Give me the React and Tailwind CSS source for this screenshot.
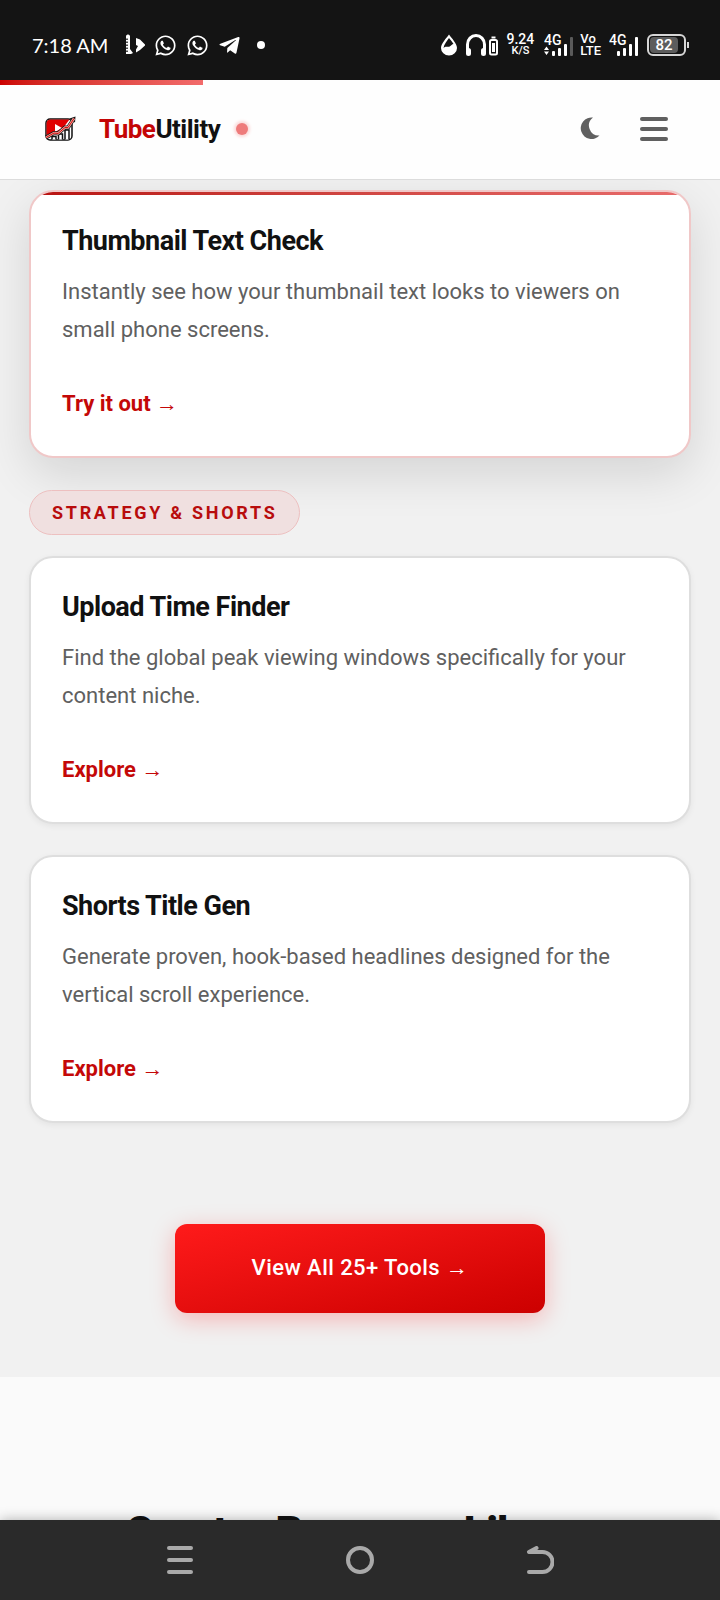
import { FaWhatsapp, FaTelegramPlane } from "react-icons/fa";

const tools = [
  {
    id: "thumbnail",
    title: "Thumbnail Text Check",
    text: "Instantly see how your thumbnail text looks to viewers on small phone screens.",
    link: "Try it out",
    active: true,
  },
];

const strategyTools = [
  {
    id: "upload-time",
    title: "Upload Time Finder",
    text: "Find the global peak viewing windows specifically for your content niche.",
    link: "Explore",
  },
  {
    id: "shorts-title",
    title: "Shorts Title Gen",
    text: "Generate proven, hook-based headlines designed for the vertical scroll experience.",
    link: "Explore",
  },
];

const Signal = ({ weak }) => (
  <svg width="30" height="24" viewBox="0 0 30 24" fill="#fff">
    <text x="0" y="12" fontSize="14" fontWeight="500">
      4G
    </text>
    {weak && <path d="M2.500 13.500l2.500 3.500h-5zM2.500 22l2.500-3.500h-5z" />}
    <rect x="8" y="18" width="3" height="5" rx="1" />
    <rect x="14" y="15" width="3" height="8" rx="1" />
    <rect x="20" y="11" width="3" height="12" rx="1" />
    <rect x="26" y="4" width="3" height="19" rx="1" fill={weak ? "#5a5a5a" : "#fff"} />
  </svg>
);

const StatusBar = () => (
  <div className="flex h-20 shrink-0 items-center justify-between bg-[#141414] pt-2.5 pr-[31px] pl-8 text-white">
    <div className="flex items-center">
      <span className="w-[93px] font-['Lato',sans-serif] text-[20px] leading-6">7:18 AM</span>
      <svg width="21" height="22" viewBox="0 0 21 22" fill="#fff">
        <path d="M1 3a2 2 0 0 1 4-1v13l3 4-2 1H1z" />
        <path d="M2 4.500v14" stroke="#141414" strokeWidth="1.500" strokeDasharray="1.500 1.500" />
        <path d="M11 4l4 1.500 5 5v1L15 16l-4 2.500v-3l2-3.500-2-1z" />
      </svg>
      <FaWhatsapp size={23} className="ml-2" />
      <FaWhatsapp size={23} className="ml-[9px]" />
      <FaTelegramPlane size={23} className="ml-[9px]" />
      <span className="ml-4 size-2 rounded-full bg-white" />
    </div>

    <div className="flex items-center">
      <svg width="16" height="22" viewBox="0 0 16 22">
        <path
          d="M8 .5C5.500 4 0 9.500 0 14a8 7.500 0 0 0 16 0C16 9.500 10.500 4 8 .5z"
          fill="#fff"
        />
        <path d="M8 4C6 7 3 10 2.500 14c2-2.500 4.300-.5 6.200-1.500 1.500-.8 2.300-2.500 3.800-2.500C11.500 8 9 5.500 8 4z" fill="#141414" />
      </svg>
      <svg width="34" height="24" viewBox="0 0 34 24" className="ml-2" fill="none" stroke="#fff">
        <path d="M2.500 17v-5.500a8.500 9 0 0 1 17 0V17" strokeWidth="3" />
        <path d="M3.500 17.500v3M18.500 17.500v3" strokeWidth="5" strokeLinecap="round" />
        <rect x="25" y="7" width="7" height="14.500" rx="1.500" strokeWidth="2" />
        <path d="M26.500 4.500h4" strokeWidth="2" />
        <path d="M28.500 10v9" strokeWidth="3" />
      </svg>
      <span className="ml-2 flex flex-col items-center font-medium">
        <span className="text-sm leading-3">9.24</span>
        <span className="text-[11px] leading-3">K/S</span>
      </span>
      <span className="ml-2.5">
        <Signal weak />
      </span>
      <span className="ml-1.5 flex flex-col text-[13px] leading-3 font-medium">
        <span>Vo</span>
        <span>LTE</span>
      </span>
      <span className="ml-2">
        <Signal />
      </span>
      <span className="ml-2 flex items-center gap-px">
        <span className="flex h-[22px] w-[39px] rounded-md border-2 border-[#d6d6d6] p-px">
          <span className="flex w-7 items-center justify-center rounded-sm bg-[#5c5c5c] text-[15px] font-medium">
            82
          </span>
        </span>
        <span className="h-1.5 w-0.5 bg-[#d6d6d6]" />
      </span>
    </div>
  </div>
);

const Logo = () => (
  <svg width="32" height="26" viewBox="0 0 32 26">
    <rect x="2" y="3" width="26" height="21" rx="4" fill="#fff" stroke="#111" strokeWidth="1.500" />
    <path d="M2.500 19V7a4 4 0 0 1 4-3.500h19l-6 8-7 5z" fill="#e00000" />
    <path d="M11 8v8l7-4z" fill="#fff" />
    <path
      d="M8 23.500v-3h4v3M14.500 23.500V18h4v5.500M21 23.500V14h4v9.500"
      fill="#fff"
      stroke="#111"
      strokeWidth="1.500"
    />
    <path d="M2 21.500L10 17l4 .5 7-6 3 0L29 4" fill="none" stroke="#111" strokeWidth="4" />
    <path d="M25.500 2.500L31.500.5l-.5 6z" fill="#111" />
    <path d="M2 21.500L10 17l4 .5 7-6 3 0L30 2.500" fill="none" stroke="#f6a8a0" strokeWidth="2.500" />
    <path d="M2 21.500L10 17l4 .5 7-6 3 0L30 2.500" fill="none" stroke="#d01010" strokeWidth="1" />
  </svg>
);

const Header = () => (
  <header className="relative z-10 flex h-[100px] shrink-0 items-center justify-between border-b border-[#dcdcdc] bg-[#fefefe] pr-[52px] pb-0.5 pl-11">
    <span className="absolute top-0 left-0 h-[5px] w-[203px] bg-linear-to-r from-[#cc0000] to-[#f26b6b]" />
    <a href="#home" className="flex items-center">
      <Logo />
      <span className="ml-[23px] text-[26px] leading-8 font-bold tracking-[-0.5px] text-[#111111]">
        <span className="text-[#c40505]">Tube</span>Utility
      </span>
      <span className="ml-4 size-3 rounded-full bg-[#ee7b7b] shadow-[0_0_3px_2px_#fbd9d9]" />
    </a>
    <div className="flex items-center gap-10">
      <button type="button" aria-label="Toggle dark mode">
        <svg width="20" height="23" viewBox="0 0 20 23" className="block" fill="#606060">
          <path d="M13 .5a10.800 10.800 0 1 0 6.500 18A10 10 0 0 1 13 .5z" />
        </svg>
      </button>
      <button type="button" aria-label="Open menu" className="flex flex-col gap-1.5">
        <span className="h-1 w-7 rounded-full bg-[#606060]" />
        <span className="h-1 w-7 rounded-full bg-[#606060]" />
        <span className="h-1 w-7 rounded-full bg-[#606060]" />
      </button>
    </div>
  </header>
);

const ToolCard = ({ tool }) => (
  <article
    className={`relative overflow-hidden rounded-3xl border-2 bg-white px-[31px] py-8 ${
      tool.active
        ? "border-[#f0c8c8] shadow-[0_16px_48px_rgba(0,0,0,0.12)]"
        : "border-[#dedede] shadow-[0_2px_6px_rgba(0,0,0,0.06)]"
    }`}
  >
    {tool.active && (
      <span className="absolute inset-x-0 top-0 h-[3px] bg-linear-to-r from-[#b80f0f] to-[#e86c6c]" />
    )}
    <h3 className="text-[27px] leading-[34px] font-bold tracking-[-0.5px] text-[#111111]">{tool.title}</h3>
    <p className="mt-[15px] text-[22px] leading-[38px] text-[#606060]">{tool.text}</p>
    <a
      href={`#${tool.id}`}
      className="mt-[35px] block text-[22px] leading-10 font-bold text-[#c40808]"
    >
      {tool.link} →
    </a>
  </article>
);

const NavBar = () => (
  <nav className="relative z-10 flex h-20 shrink-0 items-center justify-center bg-[#2a2a2a] shadow-[0_0_12px_rgba(0,0,0,0.3)]">
    <button type="button" aria-label="Recent apps" className="flex w-1/4 flex-col items-center gap-2">
      <span className="h-1 w-[26px] rounded-full bg-[#a9a9a9]" />
      <span className="h-1 w-[26px] rounded-full bg-[#a9a9a9]" />
      <span className="h-1 w-[26px] rounded-full bg-[#a9a9a9]" />
    </button>
    <button type="button" aria-label="Home" className="flex w-1/4 justify-center">
      <span className="size-7 rounded-full border-4 border-[#a9a9a9]" />
    </button>
    <button type="button" aria-label="Back" className="flex w-1/4 justify-center">
      <svg
        width="28"
        height="28"
        viewBox="0 0 28 28"
        fill="none"
        stroke="#a9a9a9"
        strokeWidth="4"
        strokeLinecap="round"
        strokeLinejoin="round"
      >
        <path d="M10.500 2L3 6h13.500a10 10 0 0 1 0 20H3" />
      </svg>
    </button>
  </nav>
);

export default function App() {
  return (
    <div className="flex h-screen flex-col font-['Roboto',sans-serif]">
      <StatusBar />
      <Header />

      <main className="min-h-0 flex-1 overflow-y-auto bg-[#f1f1f1] [scrollbar-width:none]">
        <section className="px-[29px] pt-2.5 pb-16">
          {tools.map((tool) => (
            <ToolCard key={tool.id} tool={tool} />
          ))}

          <h2 className="relative mt-8 mb-[21px] w-fit rounded-full border border-[#edc0c0] bg-[#f0e0e0] px-[22px] text-lg leading-[43px] font-bold tracking-[0.15em] text-[#b80c0c]">
            STRATEGY &amp; SHORTS
          </h2>

          <div className="flex flex-col gap-[31px]">
            {strategyTools.map((tool) => (
              <ToolCard key={tool.id} tool={tool} />
            ))}
          </div>

          <div className="mt-[101px] flex justify-center">
            <a
              href="#tools"
              className="rounded-xl bg-linear-to-br from-[#ff1a1a] to-[#cc0000] px-[77px] pt-[23px] pb-[25px] text-[22px] leading-[41px] font-medium tracking-[0.02em] text-white shadow-[0_6px_24px_rgba(255,0,0,0.25)]"
            >
              View All 25+ Tools →
            </a>
          </div>
        </section>

        <section className="bg-[#fafafa] pt-[130px] pb-20">
          <h2 className="text-center text-[44px] leading-[52px] font-extrabold tracking-tight text-[#111111]">
            Creator Resource Library
          </h2>
        </section>
      </main>

      <NavBar />
    </div>
  );
}
